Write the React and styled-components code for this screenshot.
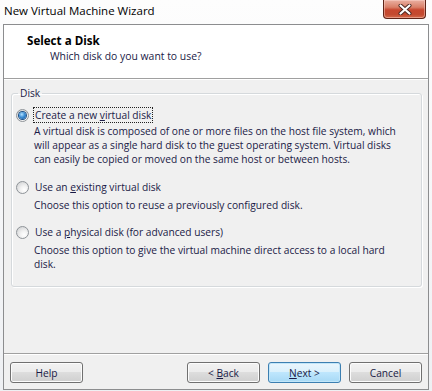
import React from 'react';
import styled, { createGlobalStyle } from 'styled-components';

const GlobalStyle = createGlobalStyle`
  html, body {
    margin: 0;
    padding: 0;
    background: #f7f8fa;
  }
  body {
    font-family: "Open Sans", "Noto Sans", sans-serif;
  }
`;

//Window frame
const Window = styled.div`
  width: 432px;
  height: 391px;
  display: flex;
  flex-direction: column;
  box-sizing: border-box;
  background: linear-gradient(180deg, #fdfdfd 0%, #f4f5f7 60%, #eef0f3 100%);
`;

const TitleBar = styled.div`
  height: 24px;
  flex: none;
  display: flex;
  justify-content: space-between;
  align-items: flex-start;
  padding-left: 4px;
  padding-right: 6px;
`;

const Caption = styled.span`
  font-size: 11.5px;
  line-height: 16px;
  margin-top: 3px;
  color: #000;
`;

const CloseButton = styled.div`
  width: 43px;
  height: 19px;
  box-sizing: border-box;
  display: flex;
  align-items: center;
  justify-content: center;
  border: 1px solid #5e2418;
  border-top: none;
  border-radius: 0 0 4px 4px;
  background: linear-gradient(180deg, #eab0a2 0%, #d98069 40%, #c7472f 55%, #c34a30 80%, #d36a4c 100%);
  box-shadow: inset 0 0 0 1px rgba(255, 220, 210, 0.45);
`;

//Client area
const Client = styled.div`
  flex: 1;
  margin: 0 3px 1px 3px;
  border: 1px solid #8c8d8f;
  background: #f0f0f0;
  display: flex;
  flex-direction: column;
  color: #1a1a46;
  font-size: 10.2px;
`;

const Header = styled.div`
  flex: none;
  height: 54px;
  box-sizing: border-box;
  background: #fff;
  border-bottom: 1px solid #a0a0a0;
  box-shadow: 0 1px 0 #fff;
  display: flex;
  flex-direction: column;
  padding: 8px 0 0 23px;
`;

const HeaderTitle = styled.div`
  font-weight: 700;
  font-size: 11.6px;
  line-height: 16px;
  color: #000;
`;

const HeaderSubtitle = styled.div`
  padding-left: 23px;
  line-height: 15px;
  font-size: 10.4px;
`;

const Body = styled.div`
  flex: 1;
  padding: 7px 6px 0 7px;
`;

const GroupBox = styled.fieldset`
  margin: 0;
  padding: 7px 0 15px 4px;
  border: 1px solid #d5d9dc;
  border-radius: 3px;
  box-shadow: inset 1px 1px 0 #fff, 1px 1px 0 #fff;
  min-width: 0;
`;

const Legend = styled.legend`
  margin-left: 2px;
  padding: 0 2px;
  line-height: 14px;
`;

const Option = styled.div`
  display: flex;
  flex-direction: column;
  margin-top: ${p => p.$gap}px;
`;

const OptionRow = styled.div`
  display: flex;
  align-items: center;
  height: 16px;
  gap: 4px;
`;

const Radio = styled.span`
  width: 13px;
  height: 13px;
  box-sizing: border-box;
  border-radius: 50%;
  border: 1px solid #8e9398;
  background: radial-gradient(circle at 65% 70%, #ffffff 0%, #f2f2f2 35%, #c9cbcd 100%);
  display: flex;
  align-items: center;
  justify-content: center;
  flex: none;
`;

const RadioDot = styled.span`
  width: 7px;
  height: 7px;
  border-radius: 50%;
  background: radial-gradient(circle at 40% 35%, #b5e2ff 0%, #3d8fd6 45%, #0f4f99 100%);
  box-shadow: 0 0 0 1px #1b4f86;
`;

const OptionLabel = styled.span`
  line-height: 14px;
  padding: 0 1px;
  border: 1px dotted ${p => (p.$focused ? '#222' : 'transparent')};
  white-space: nowrap;
`;

const Key = styled.span`
  text-decoration: underline;
`;

const Description = styled.div`
  margin-top: ${p => p.$top}px;
  padding-left: 18px;
  line-height: 14px;
  white-space: nowrap;
`;

//Bottom buttons
const Footer = styled.div`
  flex: none;
  border-top: 1px solid #a0a0a0;
  box-shadow: inset 0 1px 0 #fff;
  display: flex;
  align-items: center;
  gap: 8px;
  padding: 8px 6px 6px 6px;
`;

const Spacer = styled.div`
  flex: 1;
`;

const Button = styled.div`
  width: 73px;
  height: 21px;
  box-sizing: border-box;
  display: flex;
  align-items: center;
  justify-content: center;
  white-space: pre;
  border-radius: 3px;
  border: 1px solid ${p => (p.$primary ? '#3c7fb1' : '#707070')};
  background: ${p =>
    p.$primary
      ? 'linear-gradient(180deg, #eaf6fd 0%, #d9f0fc 50%, #bee6fd 50%, #a7d9f5 100%)'
      : 'linear-gradient(180deg, #f2f2f2 0%, #ebebeb 50%, #dddddd 50%, #cfcfcf 100%)'};
  box-shadow: inset 0 0 0 1px ${p => (p.$primary ? '#c2e6f9' : '#fcfcfc')};
  line-height: 14px;
`;

const CloseIcon = () => (
  <svg width="14" height="11" viewBox="0 0 14 11">
    <path d="M2.5 1.5 L11.5 9.5 M11.5 1.5 L2.5 9.5" stroke="#4a2620" strokeWidth="4" strokeLinecap="round" />
    <path d="M2.5 1.5 L11.5 9.5 M11.5 1.5 L2.5 9.5" stroke="#fff" strokeWidth="2.2" strokeLinecap="round" />
  </svg>
);

export default function App() {
  return (
    <>
      <GlobalStyle />
      <Window>
        <TitleBar>
          <Caption>New Virtual Machine Wizard</Caption>
          <CloseButton>
            <CloseIcon />
          </CloseButton>
        </TitleBar>
        <Client>
          <Header>
            <HeaderTitle>Select a Disk</HeaderTitle>
            <HeaderSubtitle>Which disk do you want to use?</HeaderSubtitle>
          </Header>
          <Body>
            <GroupBox>
              <Legend>Disk</Legend>
              <Option $gap={0}>
                <OptionRow>
                  <Radio>
                    <RadioDot />
                  </Radio>
                  <OptionLabel $focused>
                    Create a new <Key>v</Key>irtual disk
                  </OptionLabel>
                </OptionRow>
                <Description $top={1}>
                  A virtual disk is composed of one or more files on the host file system, which
                  <br />
                  will appear as a single hard disk to the guest operating system. Virtual disks
                  <br />
                  can easily be copied or moved on the same host or between hosts.
                </Description>
              </Option>
              <Option $gap={13}>
                <OptionRow>
                  <Radio />
                  <OptionLabel>
                    Use an <Key>e</Key>xisting virtual disk
                  </OptionLabel>
                </OptionRow>
                <Description $top={3}>Choose this option to reuse a previously configured disk.</Description>
              </Option>
              <Option $gap={12}>
                <OptionRow>
                  <Radio />
                  <OptionLabel>
                    Use a <Key>p</Key>hysical disk (for advanced users)
                  </OptionLabel>
                </OptionRow>
                <Description $top={3}>
                  Choose this option to give the virtual machine direct access to a local hard
                  <br />
                  disk.
                </Description>
              </Option>
            </GroupBox>
          </Body>
          <Footer>
            <Button>Help</Button>
            <Spacer />
            <Button>
              {'< '}
              <Key>B</Key>
              {'ack'}
            </Button>
            <Button $primary>
              <Key>N</Key>
              {'ext >'}
            </Button>
            <Button>Cancel</Button>
          </Footer>
        </Client>
      </Window>
    </>
  );
}
